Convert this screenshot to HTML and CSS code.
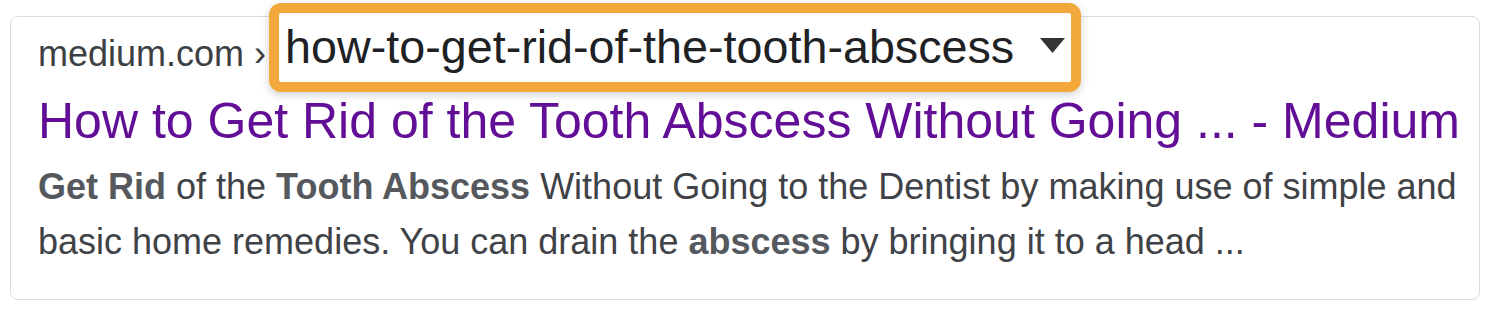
FILE: index.html
```html
<!DOCTYPE html>
<html lang="en">
<head>
    <meta charset="UTF-8" />
    <meta name="viewport" content="width=device-width, initial-scale=1.0" />
    <title>Search Result</title>
    <link rel="stylesheet" href="styles.css">
</head>
<body>

    <div class="result">
        <div class="url-row">
            <span class="domain">medium.com ›</span>
            <div class="slug-box">
                <span class="slug">how-to-get-rid-of-the-tooth-abscess</span>
                <svg class="caret" width="25" height="15" viewBox="0 0 25 15">
                    <polygon points="0,0 25,0 12.5,15" fill="#333" />
                </svg>
            </div>
        </div>

        <a class="title" href="#">How to Get Rid of the Tooth Abscess Without Going ... - Medium</a>

        <p class="snippet">
            <b>Get Rid</b> of the <b>Tooth Abscess</b> Without Going to the Dentist by making use of simple and
            basic home remedies. You can drain the <b>abscess</b> by bringing it to a head ...
        </p>
    </div>

</body>
</html>
```

FILE: styles.css
```css
body {
    margin: 0;
    background-color: #fff;
    font-family: "Liberation Sans", Arial, sans-serif;
}

.result {
    margin: 16px 10px 0 10px;
    padding: 12px 20px 30px 27px;
    border: 1px solid #dadce0;
    border-radius: 8px;
}

.url-row {
    display: flex;
    align-items: flex-start;
    height: 50px;
}

.domain {
    font-size: 36px;
    line-height: 50px;
    color: #3c4043;
    white-space: nowrap;
}

.slug-box {
    display: flex;
    align-items: center;
    margin: -26px 0 0 3px;
    padding: 0 6px;
    background-color: #fff;
    border: 10px solid #f3a83b;
    border-radius: 12px;
    box-shadow: 0 3px 10px rgba(0,0,0,0.18);
}

.slug {
    font-size: 46.7px;
    line-height: 69px;
    color: #202124;
    white-space: nowrap;
}

.caret {
    display: block;
    margin: -4px 0 0 26px;
}

.title {
    display: block;
    margin-top: 13px;
    font-size: 50px;
    line-height: 58px;
    color: #620e96;
    text-decoration: none;
    white-space: nowrap;
}

.snippet {
    margin: 9px 0 0 0;
    font-size: 36px;
    line-height: 55px;
    color: #3f4246;
}

    .snippet b {
        color: #55595e;
    }
```
